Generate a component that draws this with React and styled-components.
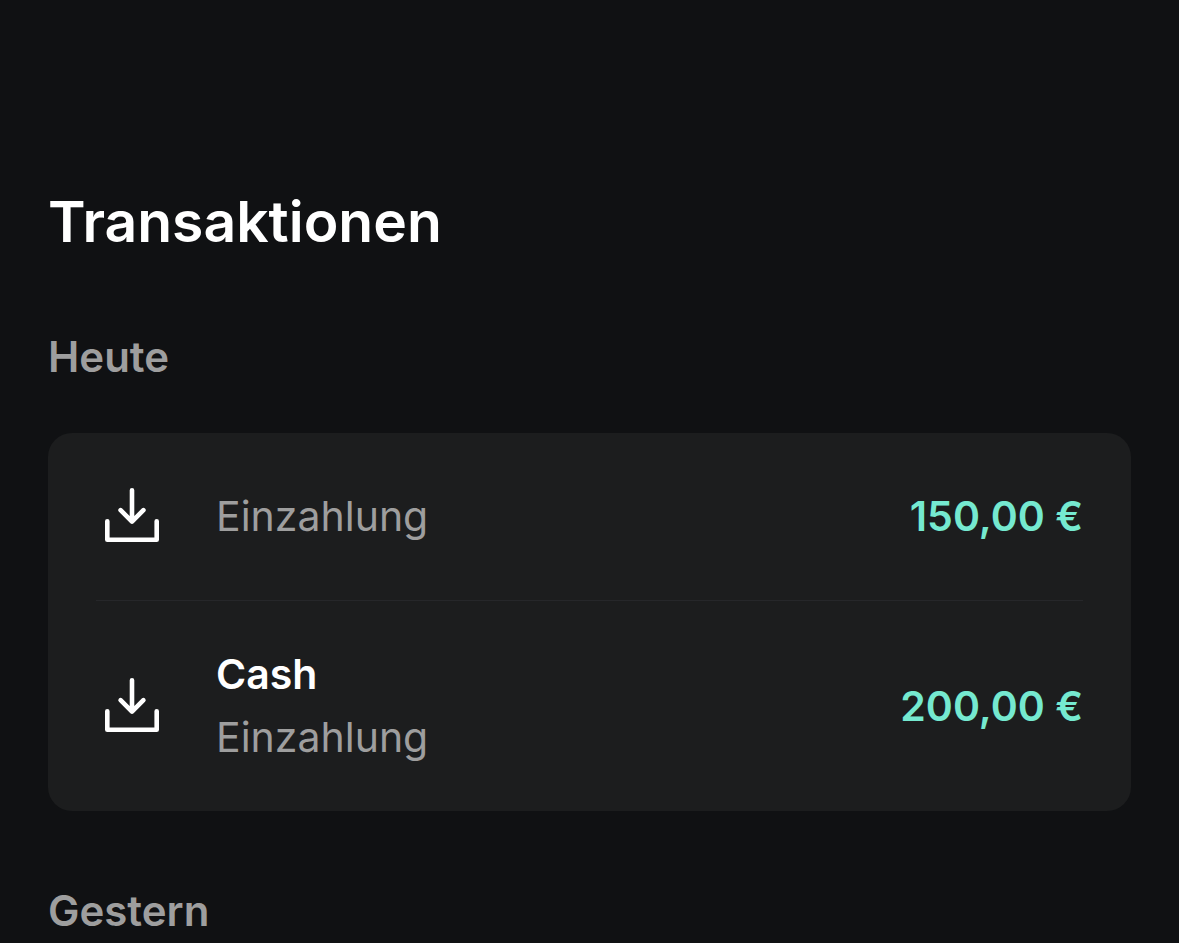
import React from 'react'
import styled, { createGlobalStyle } from 'styled-components'

const GlobalStyle = createGlobalStyle`
  body {
    margin: 0;
    background: #101113;
    font-family: Inter, sans-serif;
    color: #fff;
  }
`
const Page = styled.main`
  padding: 184px 48px 0;
  height: 100vh;
  box-sizing: border-box;
  overflow: hidden;
`
const Title = styled.h1`
  margin: 0 0 70px;
  font-size: 57px;
  line-height: 75px;
  font-weight: 600;
`
const Day = styled.h2`
  margin: 0;
  font-size: 42px;
  line-height: 56px;
  font-weight: 600;
  color: #9e9e9e;
`
const Card = styled.ul`
  margin: 48px 0 72px;
  padding: 0 48px;
  list-style: none;
  border-radius: 24px;
  background: #1c1d1e;
`
const Row = styled.li`
  display: flex;
  align-items: center;
  padding: ${p => (p.$titled ? 42 : 52)}px 0;
  & + & {
    border-top: 1px solid #26272a;
  }
`
const Icon = styled.svg`
  flex: none;
  width: 72px;
  height: 61px;
  margin-right: 48px;
`
const Texts = styled.div`
  flex: 1;
`
const Name = styled.div`
  font-size: 41px;
  line-height: 63px;
  font-weight: 600;
`
const Kind = styled.div`
  font-size: 41px;
  line-height: 63px;
  color: #9e9e9e;
`
const Amount = styled.div`
  font-size: 41px;
  line-height: 63px;
  font-weight: 600;
  color: #75e9d0;
`

const DepositIcon = () =>
  <Icon
    viewBox="0 0 72 61"
    fill="none"
    stroke="#fff"
    strokeWidth="4.6"
    strokeLinecap="round"
    strokeLinejoin="round"
    aria-hidden="true"
  >
    <path d="M11.3 35.3v18.4h49.4V35.3" />
    <path d="M36 4.3v31M24.6 24.2L36 35.6l11.4-11.4" />
  </Icon>

const Transaction = ({ name, kind, amount }) =>
  <Row $titled={!!name}>
    <DepositIcon />
    <Texts>
      {name && <Name>{name}</Name>}
      <Kind>{kind}</Kind>
    </Texts>
    <Amount>{amount}</Amount>
  </Row>

const App = () =>
  <Page>
    <GlobalStyle />
    <Title>Transaktionen</Title>
    <Day>Heute</Day>
    <Card>
      <Transaction kind="Einzahlung" amount="150,00 €" />
      <Transaction name="Cash" kind="Einzahlung" amount="200,00 €" />
    </Card>
    <Day>Gestern</Day>
  </Page>

export default App
